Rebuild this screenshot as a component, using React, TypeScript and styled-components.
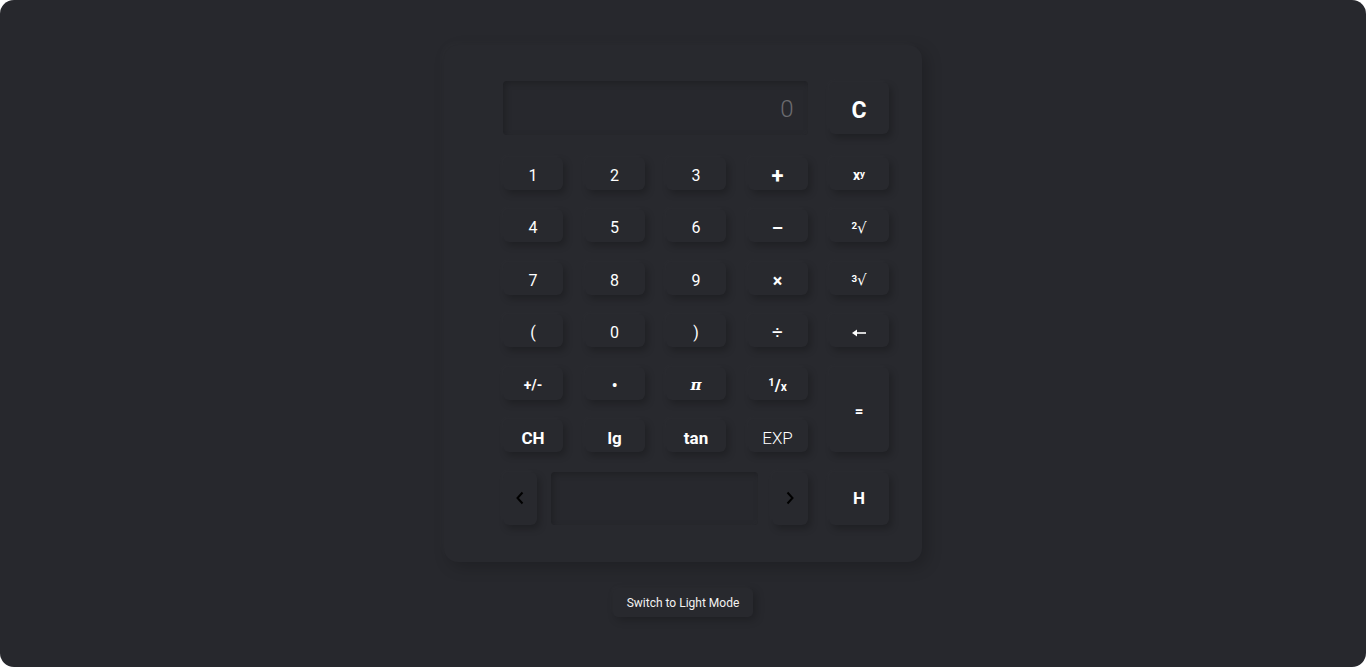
import React from "react";
import styled, { createGlobalStyle } from "styled-components";

const Global = createGlobalStyle`
  html, body { margin: 0; padding: 0; background: #ffffff; }
  body { font-family: Roboto, "Liberation Sans", sans-serif; }
  * { box-sizing: border-box; }
`;

const Page = styled.div`
  width: 1366px;
  height: 667px;
  border-radius: 14px;
  background: #27282d;
  display: flex;
  flex-direction: column;
  align-items: center;
  padding-top: 45px;
  overflow: hidden;
`;

const Card = styled.div`
  width: 478px;
  height: 517px;
  padding: 36px 0 0 59px;
  border-radius: 14px;
  background: #28292e;
  box-shadow: 5px 5px 16px rgba(0, 0, 0, 0.2), -3px -3px 10px rgba(255, 255, 255, 0.02);
`;

const Grid = styled.div`
  display: grid;
  grid-template-columns: repeat(5, 60px);
  grid-template-rows: 56px repeat(6, 33px) 53px;
  column-gap: 21.5px;
  row-gap: 19.5px;
`;

const Display = styled.div`
  grid-column: 1 / 5;
  height: 54px;
  border-radius: 4px;
  background: #27282d;
  box-shadow: inset 2px 2px 6px rgba(0, 0, 0, 0.22), inset -2px -2px 4px rgba(255, 255, 255, 0.015);
  display: flex;
  align-items: center;
  justify-content: flex-end;
  padding: 2px 14px 0 0;
  font-size: 24px;
  font-weight: 300;
  color: #6c6c70;
`;

const Key = styled.button<{ $bold?: boolean; $size?: number; $span?: number; $light?: boolean }>`
  border: none;
  outline: none;
  margin: 0;
  padding: 4px 0 0;
  border-radius: 6px;
  background: #28292e;
  color: #ffffff;
  font-family: Roboto, "Liberation Sans", sans-serif;
  font-size: ${(p) => p.$size ?? 16}px;
  font-weight: ${(p) => (p.$bold ? 700 : p.$light ? 300 : 400)};
  box-shadow: 3px 4px 7px rgba(0, 0, 0, 0.22), -2px -2px 5px rgba(255, 255, 255, 0.018);
  display: flex;
  align-items: center;
  justify-content: center;
  ${(p) => (p.$span ? `grid-row: span ${p.$span};` : "")}
  sup { font-size: 0.7em; line-height: 0; position: relative; top: -0.15em; }
  sub { font-size: 0.75em; line-height: 0; position: relative; top: 0.2em; }
`;

const ClearKey = styled(Key)`
  height: 52px;
  margin-top: 1px;
`;

const HistoryKey = styled(Key)`
  padding: 0;
`;

const BottomRow = styled.div`
  grid-column: 1 / 5;
  display: flex;
  gap: 14px;
  align-items: stretch;
`;

const ArrowKey = styled(Key)`
  width: 34px;
  padding: 0;
  color: #000;
  svg { display: block; }
`;

const ArrowKeyRight = styled(ArrowKey)`
  width: 36px;
`;

const History = styled.div`
  flex: 1;
  border-radius: 4px;
  background: #27282d;
  box-shadow: inset 2px 2px 6px rgba(0, 0, 0, 0.22), inset -2px -2px 4px rgba(255, 255, 255, 0.015);
`;

const Serif = styled.span`
  font-family: "DejaVu Serif", "Liberation Serif", serif;
  font-style: italic;
  font-weight: 700;
`;

const Root = styled.span`
  font-family: "DejaVu Sans", sans-serif;
  font-weight: 400;
  font-size: 15px;
`;

const ModeButton = styled.button`
  margin-top: 26px;
  border: none;
  padding: 8px 14px 7px;
  border-radius: 5px;
  background: #28292e;
  color: #f2f2f2;
  font-family: Roboto, "Liberation Sans", sans-serif;
  font-size: 12px;
  box-shadow: 3px 3px 8px rgba(0, 0, 0, 0.22), -2px -2px 5px rgba(255, 255, 255, 0.018);
`;

const Chevron = ({ dir }: { dir: "left" | "right" }) => (
  <svg width="10" height="14" viewBox="0 0 10 14">
    <path
      d={dir === "left" ? "M7.5 1.5 L2.5 7 L7.5 12.5" : "M2.5 1.5 L7.5 7 L2.5 12.5"}
      fill="none"
      stroke="#000"
      strokeWidth="2"
    />
  </svg>
);

const BackArrow = () => (
  <svg width="16" height="10" viewBox="0 0 16 10">
    <path d="M15 5 H4" stroke="#fff" strokeWidth="1.6" />
    <path d="M1 5 L6 1.5 L6 8.5 Z" fill="#fff" />
  </svg>
);

export default function App() {
  return (
    <>
      <Global />
      <Page>
        <Card>
          <Grid>
            <Display>0</Display>
            <ClearKey $bold $size={23}>C</ClearKey>

            <Key>1</Key>
            <Key>2</Key>
            <Key>3</Key>
            <Key $bold $size={22}>+</Key>
            <Key $bold $size={14}>x<sup>y</sup></Key>

            <Key>4</Key>
            <Key>5</Key>
            <Key>6</Key>
            <Key $bold $size={18}>–</Key>
            <Key $bold $size={14}><sup>2</sup><Root>√</Root></Key>

            <Key>7</Key>
            <Key>8</Key>
            <Key>9</Key>
            <Key $bold $size={18}>×</Key>
            <Key $bold $size={14}><sup>3</sup><Root>√</Root></Key>

            <Key>(</Key>
            <Key>0</Key>
            <Key>)</Key>
            <Key $size={19}>÷</Key>
            <Key $bold $size={14}><BackArrow /></Key>

            <Key $bold $size={14}>+/-</Key>
            <Key $bold $size={16}>•</Key>
            <Key $size={15}><Serif>π</Serif></Key>
            <Key $bold $size={16}><sup>1</sup>/<sub>x</sub></Key>
            <Key $bold $size={15} $span={2}>=</Key>

            <Key $bold $size={17}>CH</Key>
            <Key $bold $size={17}>lg</Key>
            <Key $bold $size={17}>tan</Key>
            <Key $light $size={17}>EXP</Key>

            <BottomRow>
              <ArrowKey><Chevron dir="left" /></ArrowKey>
              <History />
              <ArrowKeyRight><Chevron dir="right" /></ArrowKeyRight>
            </BottomRow>
            <HistoryKey $bold $size={17}>H</HistoryKey>
          </Grid>
        </Card>
        <ModeButton>Switch to Light Mode</ModeButton>
      </Page>
    </>
  );
}
